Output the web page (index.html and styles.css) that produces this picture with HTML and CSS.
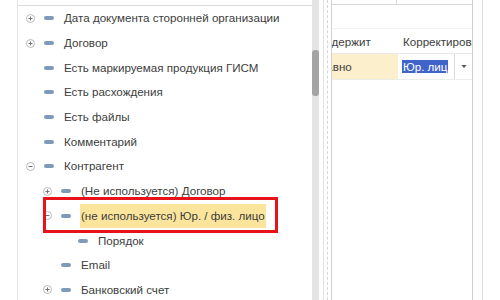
FILE: index.html
```html
<!DOCTYPE html>
<html>
<head>
    <meta charset="UTF-8" />
    <title>Отбор</title>
    <link rel="stylesheet" href="styles.css">
</head>
<body>
    <div class="page">
        <div class="gutter"></div>

        <div class="tree">
            <div class="tree-top"></div>

            <div class="row l0">
                <svg class="toggle" viewBox="0 0 9 9"><circle cx="4.5" cy="4.5" r="4" /><path d="M2.5 4.5h4M4.5 2.5v4" /></svg>
                <span class="field"></span>
                <span class="name">Дата документа сторонней организации</span>
            </div>
            <div class="row l0">
                <svg class="toggle" viewBox="0 0 9 9"><circle cx="4.5" cy="4.5" r="4" /><path d="M2.5 4.5h4M4.5 2.5v4" /></svg>
                <span class="field"></span>
                <span class="name">Договор</span>
            </div>
            <div class="row l0">
                <span class="toggle"></span>
                <span class="field"></span>
                <span class="name">Есть маркируемая продукция ГИСМ</span>
            </div>
            <div class="row l0">
                <span class="toggle"></span>
                <span class="field"></span>
                <span class="name">Есть расхождения</span>
            </div>
            <div class="row l0">
                <span class="toggle"></span>
                <span class="field"></span>
                <span class="name">Есть файлы</span>
            </div>
            <div class="row l0">
                <span class="toggle"></span>
                <span class="field"></span>
                <span class="name">Комментарий</span>
            </div>
            <div class="row l0">
                <svg class="toggle" viewBox="0 0 9 9"><circle cx="4.5" cy="4.5" r="4" /><path d="M2.5 4.5h4" /></svg>
                <span class="field"></span>
                <span class="name">Контрагент</span>
            </div>
            <div class="row l1">
                <svg class="toggle" viewBox="0 0 9 9"><circle cx="4.5" cy="4.5" r="4" /><path d="M2.5 4.5h4M4.5 2.5v4" /></svg>
                <span class="field"></span>
                <span class="name">(Не используется) Договор</span>
            </div>
            <div class="row l1 current">
                <svg class="toggle" viewBox="0 0 9 9"><circle cx="4.5" cy="4.5" r="4" /><path d="M2.5 4.5h4" /></svg>
                <span class="field"></span>
                <span class="name selected">(не используется) Юр. / физ. лицо</span>
                <div class="mark"></div>
            </div>
            <div class="row l2">
                <span class="toggle"></span>
                <span class="field"></span>
                <span class="name">Порядок</span>
            </div>
            <div class="row l1">
                <span class="toggle"></span>
                <span class="field"></span>
                <span class="name">Email</span>
            </div>
            <div class="row l1">
                <svg class="toggle" viewBox="0 0 9 9"><circle cx="4.5" cy="4.5" r="4" /><path d="M2.5 4.5h4M4.5 2.5v4" /></svg>
                <span class="field"></span>
                <span class="name">Банковский счет</span>
            </div>
        </div>

        <div class="scroll"><div class="thumb"></div></div>
        <div class="gap"></div>
        <div class="split"><div class="dash"></div></div>

        <div class="grid">
            <div class="grid-top"><div class="grid-top-cell"></div></div>
            <div class="grid-head">
                <div class="cell cond"><span class="clip-text head-text">Содержит</span></div>
                <div class="cell value">Корректировка</div>
            </div>
            <div class="grid-row">
                <div class="cell cond filled"><span class="clip-text row-text">Равно</span></div>
                <div class="cell value">
                    <div class="input"><span class="sel">Юр. лиц</span></div>
                    <div class="drop"><svg viewBox="0 0 7 4"><path d="M0 0h7L3.5 4z" /></svg></div>
                </div>
            </div>
        </div>

        <div class="outer"></div>
    </div>
</body>
</html>
```
FILE: styles.css
```css
body {
    margin: 0;
    background-color: #fff;
    font-family: "Liberation Sans", Arial, sans-serif;
    font-size: 11.6px;
    color: #3d3d3d;
}

.page {
    display: flex;
    height: 300px;
    overflow: hidden;
}

.gutter {
    width: 17px;
    border-right: 1px solid #e6e6e6;
    flex-shrink: 0;
}

/* tree of fields */
.tree {
    width: 294px;
    flex-shrink: 0;
    display: flex;
    flex-direction: column;
}

.tree-top {
    height: 5px;
    border-bottom: 1px solid #dcdcdc;
    flex-shrink: 0;
}

.row {
    height: 24.7px;
    flex-shrink: 0;
    display: flex;
    align-items: center;
    position: relative;
    white-space: nowrap;
}

.l0 { padding-left: 8px; }
.l1 { padding-left: 25px; }
.l2 { padding-left: 42px; }

.toggle {
    width: 9px;
    height: 9px;
    margin-right: 9px;
    flex-shrink: 0;
}

.toggle circle {
    fill: #fff;
    stroke: #a8a8a8;
    stroke-width: 0.8;
}

.toggle path {
    stroke: #707070;
    stroke-width: 1;
    fill: none;
}

.field {
    width: 10px;
    height: 4px;
    border-radius: 2px;
    background-color: #7d9bb8;
    margin-right: 10px;
    flex-shrink: 0;
}

.name {
    line-height: 24px;
}

.selected {
    background-color: #fbe59c;
    padding: 0 1px;
    margin-left: -1px;
}

.mark {
    position: absolute;
    left: 25px;
    top: -7px;
    width: 229px;
    height: 30px;
    border: 3px solid #e8121a;
}

/* scrollbar */
.scroll {
    width: 7px;
    flex-shrink: 0;
    background-color: #e4e4e4;
}

.thumb {
    margin-top: 50px;
    height: 46px;
    border-radius: 3px;
    background-color: #a4a4a4;
}

.gap {
    width: 4px;
    flex-shrink: 0;
}

.split {
    width: 7px;
    flex-shrink: 0;
    border-left: 1px solid #e2e2e2;
    border-right: 1px solid #d2d2d2;
}

.dash {
    margin-left: 3px;
    height: 100%;
    border-left: 1px dashed #d6d6d6;
}

/* filter grid */
.grid {
    width: 140px;
    flex-shrink: 0;
    border-right: 1px solid #cfcfcf;
    overflow: hidden;
}

.grid-top {
    height: 4px;
    border-bottom: 1px solid #d8d8d8;
}

.grid-top-cell {
    width: 64px;
    height: 4px;
    border-right: 1px solid #d8d8d8;
}

.grid-head {
    display: flex;
    margin-top: 23px;
    height: 24px;
    border-top: 1px solid #f2f2f2;
    border-bottom: 1px solid #e8e8e8;
    align-items: center;
}

.cell {
    white-space: nowrap;
    overflow: hidden;
}

.cond {
    width: 66px;
    flex-shrink: 0;
}

.value {
    flex: 1;
    padding-left: 5px;
}

.clip-text {
    display: inline-block;
}

.head-text {
    margin-left: -15px;
}

.row-text {
    margin-left: -13px;
}

.grid-row {
    display: flex;
    height: 25px;
    border-bottom: 1px solid #ececec;
}

.filled {
    background-color: #fcf0cc;
    line-height: 25px;
}

.grid-row .value {
    display: flex;
    align-items: center;
    padding-left: 4px;
}

.input {
    flex: 1;
    overflow: hidden;
}

.sel {
    background-color: #3f63c9;
    color: #fff;
    padding: 3px 1px 4px 1px;
}

.drop {
    width: 17px;
    height: 25px;
    border-left: 1px solid #dadada;
    display: flex;
    align-items: center;
    justify-content: center;
}

.drop svg {
    width: 6px;
    height: 3px;
    fill: #555;
}

.outer {
    width: 9px;
    flex-shrink: 0;
    border-right: 1px solid #dedede;
}
```
